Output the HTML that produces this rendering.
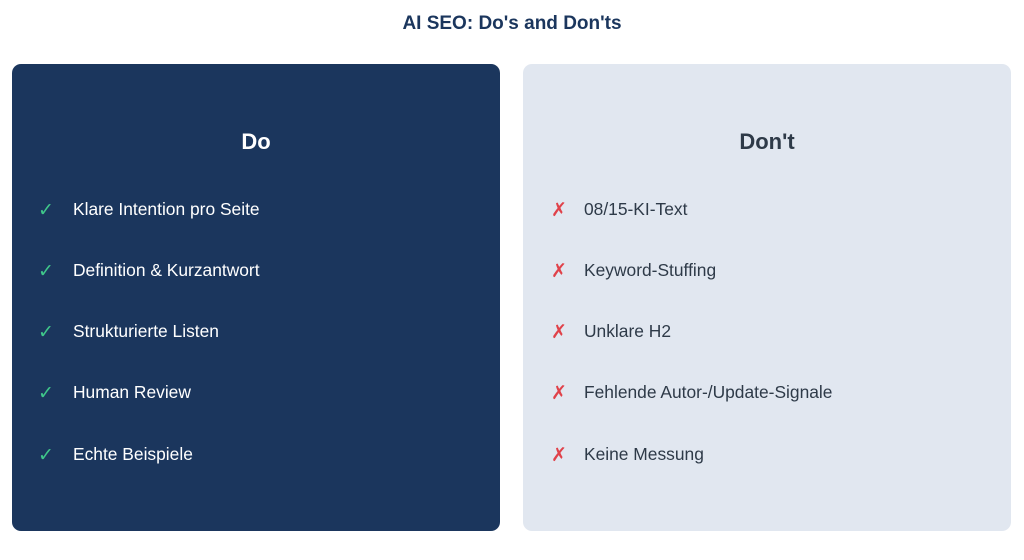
<!DOCTYPE html>
<html><head><meta charset="utf-8"><style>
body{margin:0;width:1024px;height:560px;background:#fff;font-family:"Liberation Sans",Arial,sans-serif;position:relative;overflow:hidden}
h1{position:absolute;top:13px;left:0;width:1024px;margin:0;text-align:center;font-size:19px;font-weight:bold;color:#1b365d}
.p{position:absolute;top:64px;width:488px;height:467px;border-radius:9px}
.l{left:12px;background:#1b365d;color:#fff}
.r{left:523px;background:#e1e7f0;color:#2e3a48}
.p h2{position:absolute;margin:0;width:100%;text-align:center;font-size:22px;font-weight:bold;top:65px}
.it{position:absolute;left:0;font-size:17.4px;white-space:nowrap}
.ic{position:absolute;font-size:19px}
.l .ic{left:26px;color:#3fc78a}
.r .ic{left:28px;color:#e0424a}
.tx{position:absolute;left:61px}
</style></head><body>
<h1>AI SEO: Do's and Don'ts</h1>
<div class="p l"><h2>Do</h2>
<div class="it" style="top:135px"><span class="ic">✓</span><span class="tx">Klare Intention pro Seite</span></div>
<div class="it" style="top:196px"><span class="ic">✓</span><span class="tx">Definition &amp; Kurzantwort</span></div>
<div class="it" style="top:257px"><span class="ic">✓</span><span class="tx">Strukturierte Listen</span></div>
<div class="it" style="top:318px"><span class="ic">✓</span><span class="tx">Human Review</span></div>
<div class="it" style="top:380px"><span class="ic">✓</span><span class="tx">Echte Beispiele</span></div>
</div>
<div class="p r"><h2>Don't</h2>
<div class="it" style="top:135px"><span class="ic">✗</span><span class="tx">08/15-KI-Text</span></div>
<div class="it" style="top:196px"><span class="ic">✗</span><span class="tx">Keyword-Stuffing</span></div>
<div class="it" style="top:257px"><span class="ic">✗</span><span class="tx">Unklare H2</span></div>
<div class="it" style="top:318px"><span class="ic">✗</span><span class="tx">Fehlende Autor-/Update-Signale</span></div>
<div class="it" style="top:380px"><span class="ic">✗</span><span class="tx">Keine Messung</span></div>
</div>
</body></html>
